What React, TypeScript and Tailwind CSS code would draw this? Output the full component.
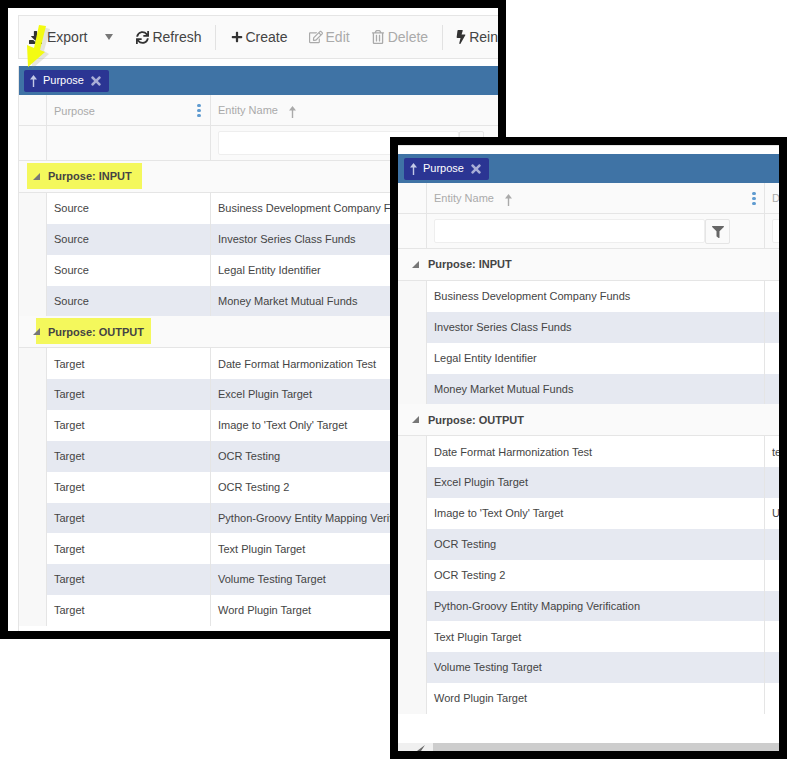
import { FaBolt, FaDownload, FaFilter, FaPlus, FaRegEdit, FaRegTrashAlt, FaSync, FaTimes } from 'react-icons/fa';

const inputRows = ['Business Development Company Funds', 'Investor Series Class Funds', 'Legal Entity Identifier', 'Money Market Mutual Funds'];
const outputRows = [
  'Date Format Harmonization Test',
  'Excel Plugin Target',
  "Image to 'Text Only' Target",
  'OCR Testing',
  'OCR Testing 2',
  'Python-Groovy Entity Mapping Verification',
  'Text Plugin Target',
  'Volume Testing Target',
  'Word Plugin Target',
];

function SortArrow({ className }: { className: string }) {
  return (
    <svg width="9" height="12" viewBox="0 0 9 12" className={className} fill="currentColor">
      <path d="M4.5 0 8 4.5H5.2V12H3.8V4.5H1Z" />
    </svg>
  );
}

function Dots() {
  return (
    <span className="flex flex-col gap-[2px]">
      <span className="w-[4px] h-[3px] rounded-full bg-[#5f9bd0]" />
      <span className="w-[4px] h-[3px] rounded-full bg-[#5f9bd0]" />
      <span className="w-[4px] h-[3px] rounded-full bg-[#5f9bd0]" />
    </span>
  );
}

function Chip() {
  return (
    <div className="w-[85px] h-[22px] rounded-[2px] bg-[#2b3593] flex items-center pl-[5px] text-white text-[11px]">
      <SortArrow className="text-[#c3c9e6] shrink-0" />
      <span className="ml-[5px]">Purpose</span>
      <FaTimes className="ml-[5px] text-[#a9afd6] text-[14px]" />
    </div>
  );
}

function GroupBar({ pad }: { pad: string }) {
  return (
    <div className={`h-[29px] bg-[#3f73a5] flex items-center shrink-0 ${pad}`}>
      <Chip />
    </div>
  );
}

function GroupRow({ label, mark, gap }: { label: string; mark?: string; gap: string }) {
  return (
    <div className="relative h-[32px] flex items-center bg-[#fafafa] border-b border-[#e5e5e5] text-[11px] font-bold text-[#444] shrink-0">
      {mark && <div className={`absolute top-[2px] h-[26px] w-[115px] bg-[#f4f85c] ${mark}`} />}
      <svg width="7" height="7" viewBox="0 0 7 7" className="relative ml-[14px] text-[#777]" fill="currentColor">
        <path d="M7 0V7H0Z" />
      </svg>
      <span className={`relative ${gap}`}>{label}</span>
    </div>
  );
}

function LeftGrid() {
  const Row = ({ name, value, shaded }: { name: string; value: string; shaded: boolean }) => (
    <div className="h-[30.85px] flex bg-[#f8f8f8] text-[11px] text-[#444] shrink-0">
      <div className="w-[27px] shrink-0" />
      <div className={`flex flex-1 items-center ${shaded ? 'bg-[#e6e9f1]' : 'bg-white'}`}>
        <div className="w-[165px] pl-[7px] h-full flex items-center border-l border-r border-[#e5e5e5] shrink-0">{value}</div>
        <div className="pl-[7px] whitespace-nowrap">{name}</div>
      </div>
    </div>
  );

  return (
    <div className="absolute left-0 top-0 w-[506px] h-[639px] border-8 border-black bg-white overflow-hidden flex flex-col pl-[10px] pt-[7px]">
      <div className="h-[44px] w-[500px] shrink-0 bg-[#fafafa] border border-[#e5e5e5] flex items-center text-[14px] text-[#444] whitespace-nowrap">
        <FaDownload className="ml-[10px] text-[13px] text-[#333] shrink-0" />
        <span className="ml-[5px]">Export</span>
        <svg width="8" height="6" viewBox="0 0 8 6" className="ml-[18px] text-[#777] shrink-0" fill="currentColor">
          <path d="M0 0H8L4 6Z" />
        </svg>
        <FaSync className="ml-[23px] text-[13px] text-[#333] shrink-0" />
        <span className="ml-[3px]">Refresh</span>
        <div className="ml-[13px] w-px h-[25px] bg-[#e2e2e2] shrink-0" />
        <FaPlus className="ml-[15px] text-[12px] text-[#333] shrink-0" />
        <span className="ml-[3px]">Create</span>
        <FaRegEdit className="ml-[21px] text-[14px] text-[#aaa] shrink-0" />
        <span className="ml-[3px] text-[#aaa]">Edit</span>
        <FaRegTrashAlt className="ml-[21px] text-[14px] text-[#aaa] shrink-0" />
        <span className="ml-[3px] text-[#aaa]">Delete</span>
        <div className="ml-[14px] w-px h-[25px] bg-[#e2e2e2] shrink-0" />
        <FaBolt className="ml-[11px] text-[14px] text-[#333] shrink-0" />
        <span className="ml-[1px]">Reindex</span>
      </div>
      <div className="mt-[7px] w-[480px] flex-1 border-l border-[#e5e5e5] flex flex-col bg-white">
        <GroupBar pad="pl-[5px]" />
        <div className="h-[31px] flex bg-[#fafafa] border-b border-[#e5e5e5] text-[11px] text-[#aaa] shrink-0">
          <div className="w-[28px] border-r border-[#e5e5e5] shrink-0" />
          <div className="w-[164px] pl-[7px] pr-[9px] flex items-center justify-between border-r border-[#e5e5e5] shrink-0">
            <span className="mt-[2px]">Purpose</span>
            <Dots />
          </div>
          <div className="pl-[7px] flex items-center whitespace-nowrap">
            <span>Entity Name</span>
            <SortArrow className="ml-[10px] mt-[4px]" />
          </div>
        </div>
        <div className="h-[35px] flex bg-[#fafafa] border-b border-[#e5e5e5] shrink-0">
          <div className="w-[28px] border-r border-[#e5e5e5] shrink-0" />
          <div className="w-[164px] border-r border-[#e5e5e5] shrink-0" />
          <div className="pl-[7px] pt-[5px] flex items-start">
            <div className="w-[241px] h-[24px] bg-white border border-[#eee] rounded-[2px]" />
            <div className="w-[25px] h-[25px] bg-[#fafafa] border border-[#e5e5e5] rounded-[2px]" />
          </div>
        </div>
        <GroupRow label="Purpose: INPUT" mark="left-[8px]" gap="ml-[8px]" />
        {inputRows.map((name, i) => (
          <Row key={name} name={name} value="Source" shaded={i % 2 === 1} />
        ))}
        <GroupRow label="Purpose: OUTPUT" mark="left-[17px]" gap="ml-[8px]" />
        {outputRows.map((name, i) => (
          <Row key={name} name={name} value="Target" shaded={i % 2 === 1} />
        ))}
      </div>
    </div>
  );
}

function RightGrid() {
  const notes: Record<string, string> = { 'Date Format Harmonization Test': 'te', "Image to 'Text Only' Target": 'U' };

  const Row = ({ name, shaded }: { name: string; shaded: boolean }) => (
    <div className="h-[30.85px] flex bg-[#f8f8f8] text-[11px] text-[#444] shrink-0">
      <div className="w-[28px] shrink-0" />
      <div className={`flex flex-1 items-center ${shaded ? 'bg-[#e6e9f1]' : 'bg-white'}`}>
        <div className="w-[339px] pl-[7px] h-full flex items-center border-l border-r border-[#e5e5e5] shrink-0 whitespace-nowrap">{name}</div>
        <div className="pl-[7px]">{notes[name]}</div>
      </div>
    </div>
  );

  return (
    <div className="absolute left-[390px] top-[137px] w-[397px] h-[622px] border-8 border-black bg-white overflow-hidden flex flex-col">
      <div className="h-[9px] shrink-0 border-t border-[#e5e5e5]" />
      <GroupBar pad="pl-[6px]" />
      <div className="h-[31px] flex bg-[#fafafa] border-b border-[#e5e5e5] text-[11px] text-[#aaa] shrink-0">
        <div className="w-[29px] border-r border-[#e5e5e5] shrink-0" />
        <div className="w-[338px] pl-[7px] pr-[8px] flex items-center justify-between border-r border-[#e5e5e5] shrink-0">
          <div className="flex items-center">
            <span>Entity Name</span>
            <SortArrow className="ml-[10px] mt-[4px]" />
          </div>
          <Dots />
        </div>
        <div className="pl-[7px] flex items-center">D</div>
      </div>
      <div className="h-[35px] flex bg-[#fafafa] border-b border-[#e5e5e5] shrink-0">
        <div className="w-[29px] border-r border-[#e5e5e5] shrink-0" />
        <div className="w-[338px] pl-[7px] pt-[5px] flex items-start border-r border-[#e5e5e5] shrink-0">
          <div className="w-[271px] h-[24px] bg-white border border-[#eee] rounded-[2px]" />
          <div className="w-[25px] h-[25px] bg-[#fafafa] border border-[#e5e5e5] rounded-[2px] flex items-center justify-center">
            <FaFilter className="text-[12px] text-[#666]" />
          </div>
        </div>
        <div className="pl-[7px] pt-[5px]">
          <div className="w-[20px] h-[24px] bg-white border border-[#eee] rounded-[2px]" />
        </div>
      </div>
      <GroupRow label="Purpose: INPUT" gap="ml-[9px]" />
      {inputRows.map((name, i) => (
        <Row key={name} name={name} shaded={i % 2 === 1} />
      ))}
      <GroupRow label="Purpose: OUTPUT" gap="ml-[9px]" />
      {outputRows.map((name, i) => (
        <Row key={name} name={name} shaded={i % 2 === 1} />
      ))}
      <div className="flex-1" />
      <div className="h-[8px] flex shrink-0">
        <div className="w-[35px] bg-[#f0f0f0] flex items-end pl-[19px]">
          <svg width="8" height="6" viewBox="0 0 8 6" className="text-[#666]" fill="currentColor">
            <path d="M8 0 0 6H4Z" />
          </svg>
        </div>
        <div className="flex-1 bg-[#cdcdcd]" />
      </div>
    </div>
  );
}

export default function App() {
  return (
    <div className="relative w-[787px] h-[759px] bg-white overflow-hidden font-['Liberation_Sans',Arial,sans-serif]">
      <LeftGrid />
      <RightGrid />
      {/* callout arrow pointing at the grouped chip */}
      <svg width="40" height="50" viewBox="0 0 40 50" className="absolute left-[20px] top-[22px]">
        <path d="M21 4 28 6 22 28 27 31 10 46 9 24 15 26Z" fill="#8a8a60" opacity="0.2" transform="translate(2 1)" />
        <path d="M19 3 26 4 20 28 25 30 8 45 7 23 14 26Z" fill="#f3fb12" />
      </svg>
    </div>
  );
}
